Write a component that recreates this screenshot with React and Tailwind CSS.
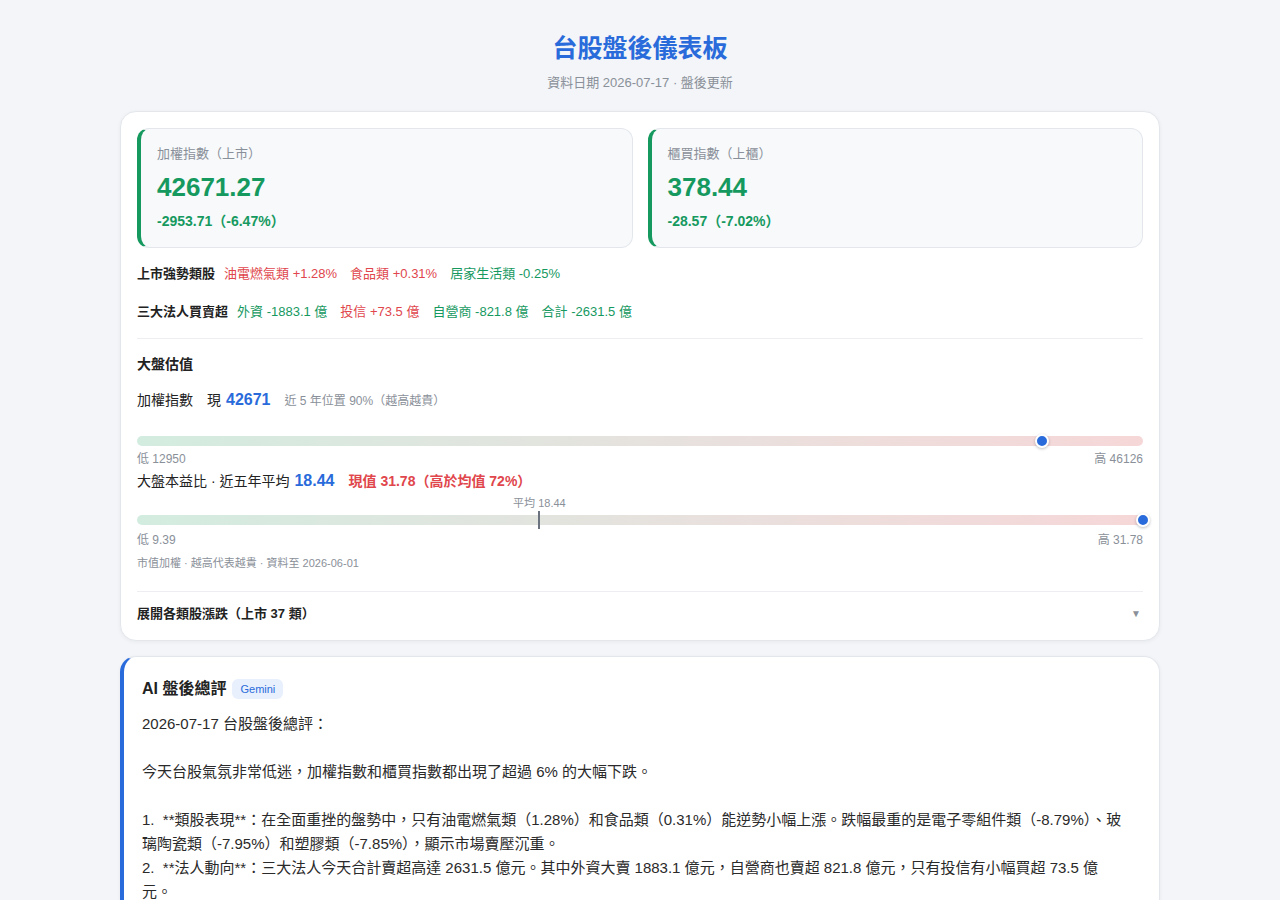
import React from 'react';

const FONT = { fontFamily: '"Liberation Sans", "Noto Sans CJK TC", "Noto Sans", sans-serif' };

const GREEN = 'text-[#16995f]';
const RED = 'text-[#e0464c]';

function IndexCard({ label, value, change }) {
  return (
    <div className="flex-1 rounded-xl border border-[#e3e7ec] border-l-4 border-l-[#16995f] bg-[#f7f9fb] px-4 pt-[15px] pb-[15px]">
      <div className="text-[13px] text-[#8a9099]">{label}</div>
      <div className={`mt-[8px] text-[26px] font-semibold leading-[32px] ${GREEN}`}>{value}</div>
      <div className={`mt-[8px] text-[14px] font-semibold ${GREEN}`}>{change}</div>
    </div>
  );
}

function RangeBar({ pct, avgPct, avgLabel }) {
  return (
    <div className="relative h-[10px] rounded-full bg-gradient-to-r from-[#d3ece0] via-[#e6e2de] to-[#f6d7d8]">
      {avgPct != null && (
        <>
          <div className="absolute top-[-19px] -translate-x-1/2 whitespace-nowrap text-[11px] leading-[14px] text-[#8a9099]" style={{ left: `${avgPct}%` }}>{avgLabel}</div>
          <div className="absolute top-[-4px] h-[18px] w-[2px] -translate-x-1/2 bg-[#6b7280]" style={{ left: `${avgPct}%` }} />
        </>
      )}
      <div className="absolute top-1/2 h-[14px] w-[14px] -translate-x-1/2 -translate-y-1/2 rounded-full border-2 border-white bg-[#2a6bdb] shadow-[0_1px_3px_rgba(0,0,0,0.25)]" style={{ left: `${pct}%` }} />
    </div>
  );
}

const commentary = `2026-07-17 台股盤後總評：

今天台股氣氛非常低迷，加權指數和櫃買指數都出現了超過 6% 的大幅下跌。

1.  **類股表現**：在全面重挫的盤勢中，只有油電燃氣類（1.28%）和食品類（0.31%）能逆勢小幅上漲。跌幅最重的是電子零組件類（-8.79%）、玻璃陶瓷類（-7.95%）和塑膠類（-7.85%），顯示市場賣壓沉重。
2.  **法人動向**：三大法人今天合計賣超高達 2631.5 億元。其中外資大賣 1883.1 億元，自營商也賣超 821.8 億元，只有投信有小幅買超 73.5 億元。`;

export default function App() {
  return (
    <div className="min-h-[900px] bg-[#f3f5f8] pb-10 text-[#222]" style={FONT}>
      <div className="mx-auto w-[1040px] pt-[31px]">
        <h1 className="text-center text-[25px] font-bold leading-[34px] text-[#2a6bdb]">台股盤後儀表板</h1>
        <div className="mt-[8px] text-center text-[13px] text-[#8a9099]">資料日期 2026-07-17 · 盤後更新</div>

        <div className="mt-[18px] rounded-2xl border border-[#e3e7ec] bg-white px-4 pt-4 pb-[17px] shadow-[0_1px_4px_rgba(0,0,0,0.05)]">
          <div className="flex gap-[15px]">
            <IndexCard label="加權指數（上市）" value="42671.27" change="-2953.71（-6.47%）" />
            <IndexCard label="櫃買指數（上櫃）" value="378.44" change="-28.57（-7.02%）" />
          </div>

          <div className="mt-[16px] flex items-center gap-[9px] text-[13px]">
            <span className="font-semibold text-[#222]">上市強勢類股</span>
            <span className={RED}>油電燃氣類 +1.28%</span>
            <span className={`ml-[4px] ${RED}`}>食品類 +0.31%</span>
            <span className={`ml-[4px] ${GREEN}`}>居家生活類 -0.25%</span>
          </div>
          <div className="mt-[18px] flex items-center gap-[9px] text-[13px]">
            <span className="font-semibold text-[#222]">三大法人買賣超</span>
            <span className={GREEN}>外資 -1883.1 億</span>
            <span className={`ml-[4px] ${RED}`}>投信 +73.5 億</span>
            <span className={`ml-[4px] ${GREEN}`}>自營商 -821.8 億</span>
            <span className={`ml-[4px] ${GREEN}`}>合計 -2631.5 億</span>
          </div>

          <div className="mt-[17px] border-t border-[#eceef1] pt-[15px]">
            <div className="text-[14px] font-semibold">大盤估值</div>
            <div className="mt-[13px] flex items-baseline text-[14px]">
              <span>加權指數</span>
              <span className="ml-[14px]">現</span>
              <span className="ml-[5px] text-[16px] font-semibold text-[#2a6bdb]">42671</span>
              <span className="ml-[14px] text-[12px] text-[#8a9099]">近 5 年位置 90%（越高越貴）</span>
            </div>
            <div className="mt-[24px]">
              <RangeBar pct={90} />
            </div>
            <div className="mt-[4px] flex justify-between text-[12px] text-[#8a9099]">
              <span>低 12950</span>
              <span>高 46126</span>
            </div>
            <div className="mt-[1px] flex items-baseline text-[14px]">
              <span>大盤本益比 · 近五年平均</span>
              <span className="ml-[5px] text-[16px] font-semibold text-[#2a6bdb]">18.44</span>
              <span className={`ml-[14px] font-semibold ${RED}`}>現值 31.78（高於均值 72%）</span>
            </div>
            <div className="mt-[22px]">
              <RangeBar pct={100} avgPct={40} avgLabel="平均 18.44" />
            </div>
            <div className="mt-[6px] flex justify-between text-[12px] text-[#8a9099]">
              <span>低 9.39</span>
              <span>高 31.78</span>
            </div>
            <div className="mt-[6px] text-[11px] text-[#8a9099]">市值加權 · 越高代表越貴 · 資料至 2026-06-01</div>
          </div>

          <div className="mt-[19px] flex items-center justify-between border-t border-[#eceef1] pt-[12px]">
            <span className="text-[13px] font-semibold">展開各類股漲跌（上市 37 類）</span>
            <span className="mr-[2px] text-[10px] text-[#8a9099]">▼</span>
          </div>
        </div>

        <div className="mt-[15px] rounded-2xl border border-[#e3e7ec] border-l-4 border-l-[#2a6bdb] bg-white px-[18px] pt-[20px] pb-6 shadow-[0_1px_4px_rgba(0,0,0,0.05)]">
          <div className="flex items-center gap-[6px]">
            <span className="text-[16px] font-semibold">AI 盤後總評</span>
            <span className="rounded-md bg-[#e8f0fd] px-2 py-[2px] text-[11px] font-medium text-[#2a6bdb]">Gemini</span>
          </div>
          <div className="mt-[11px] whitespace-pre-wrap pr-4 text-[15px] leading-[24px] text-[#2a2a2a]">{commentary}</div>
        </div>
      </div>
    </div>
  );
}
